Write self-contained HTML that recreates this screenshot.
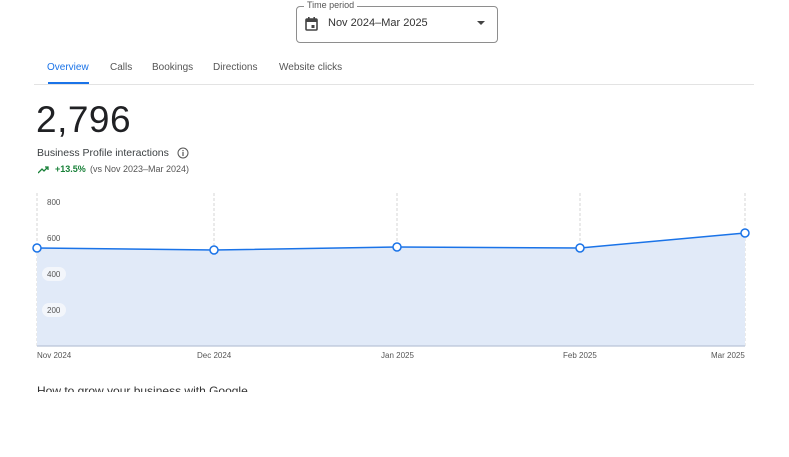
<!DOCTYPE html>
<html><head><meta charset="utf-8"><style>
body{margin:0;width:789px;height:457px;background:#fff;font-family:"Liberation Sans",Arial,sans-serif;position:relative;overflow:hidden}
.a{position:absolute}
</style></head><body>
<div class="a" style="left:296px;top:6px;width:200px;height:35px;border:1px solid #8e8e8e;border-radius:4px"></div>
<div class="a" style="left:304px;top:0px;background:#fff;padding:0 3px;font-size:9px;color:#555">Time period</div>
<svg class="a" style="left:305px;top:17px" width="13" height="14" viewBox="0 0 13 14"><rect x="1" y="2" width="11" height="11" rx="1" fill="none" stroke="#444" stroke-width="1.6"/><rect x="1" y="2" width="11" height="3" fill="#444"/><rect x="3" y="0" width="1.6" height="3" fill="#444"/><rect x="8.4" y="0" width="1.6" height="3" fill="#444"/><rect x="6.5" y="8" width="3" height="3" fill="#444"/></svg>
<div class="a" style="left:328px;top:17px;font-size:11px;color:#333">Nov 2024–Mar 2025</div>
<svg class="a" style="left:477px;top:21px" width="8" height="5"><path d="M0 0h8L4 4z" fill="#444"/></svg>
<div class="a" style="left:47px;top:62px;font-size:10px;color:#1a73e8">Overview</div>
<div class="a" style="left:48px;top:82px;width:41px;height:2px;background:#1a73e8"></div>
<div class="a" style="left:110px;top:62px;font-size:10px;color:#555">Calls</div>
<div class="a" style="left:152px;top:62px;font-size:10px;color:#555">Bookings</div>
<div class="a" style="left:213px;top:62px;font-size:10px;color:#555">Directions</div>
<div class="a" style="left:279px;top:62px;font-size:10px;color:#555">Website clicks</div>
<div class="a" style="left:34px;top:84px;width:720px;height:1px;background:#e3e3e3"></div>
<div class="a" style="left:36px;top:99px;font-size:37px;color:#202124;letter-spacing:0.5px">2,796</div>
<div class="a" style="left:37px;top:147px;font-size:10.5px;color:#3c4043">Business Profile interactions</div>
<svg class="a" style="left:177px;top:147px" width="12" height="12"><circle cx="6" cy="6" r="5" fill="none" stroke="#555" stroke-width="1"/><rect x="5.4" y="5" width="1.2" height="4" fill="#555"/><rect x="5.4" y="3" width="1.2" height="1.2" fill="#555"/></svg>
<svg class="a" style="left:38px;top:166px" width="12" height="8"><path d="M0 7l4-4 2 2 4-4M7 1h3v3" fill="none" stroke="#188038" stroke-width="1.3"/></svg>
<div class="a" style="left:55px;top:164px;font-size:9px;color:#188038;font-weight:bold">+13.5%</div>
<div class="a" style="left:90px;top:164px;font-size:9px;color:#555">(vs Nov 2023–Mar 2024)</div>
<svg class="a" style="left:0;top:190px" width="789" height="175">
<g stroke="#d6d6d6" stroke-dasharray="3,2" stroke-width="1"><path d="M37 3V156M214 3V156M397 3V156M580 3V156M745 3V156"/></g>
<path d="M37 58L214 60L397 57L580 58L745 43V156H37z" fill="#e1eaf8"/>
<path d="M37 156H745" stroke="#b9c4d8" stroke-width="1.2"/>
<path d="M37 58L214 60L397 57L580 58L745 43" fill="none" stroke="#1a73e8" stroke-width="1.5"/>
<g fill="#fff" stroke="#1a73e8" stroke-width="1.5"><circle cx="37" cy="58" r="4"/><circle cx="214" cy="60" r="4"/><circle cx="397" cy="57" r="4"/><circle cx="580" cy="58" r="4"/><circle cx="745" cy="43" r="4"/></g>
<rect x="42" y="77" width="24" height="14" rx="7" fill="#f3f6fb"/><rect x="42" y="113" width="24" height="14" rx="7" fill="#f3f6fb"/>
<g font-size="8" fill="#555" font-family="Liberation Sans,Arial,sans-serif"><text x="47" y="15">800</text><text x="47" y="51">600</text><text x="47" y="87">400</text><text x="47" y="123">200</text>
<text x="37" y="168">Nov 2024</text><text x="197" y="168">Dec 2024</text><text x="381" y="168">Jan 2025</text><text x="563" y="168">Feb 2025</text><text x="711" y="168">Mar 2025</text></g>
</svg>
<div class="a" style="left:37px;top:384px;height:8px;overflow:hidden;font-size:12px;color:#333"><div style="margin-top:0">How to grow your business with Google</div></div>
</body></html>
